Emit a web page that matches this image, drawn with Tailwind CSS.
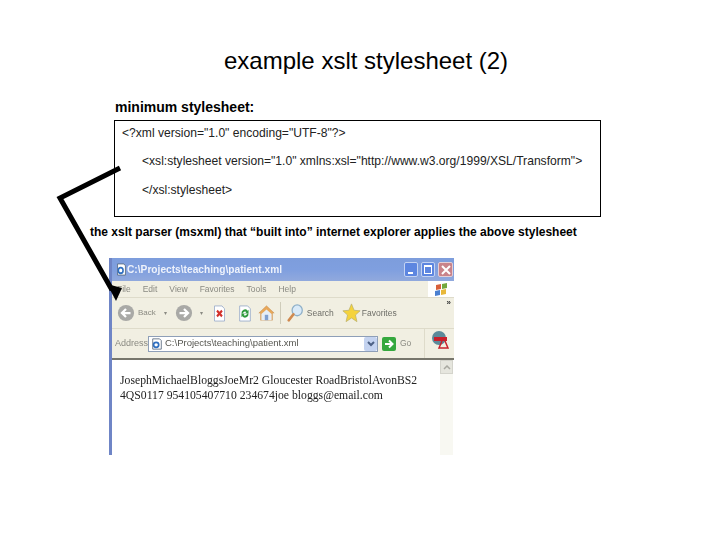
<!DOCTYPE html>
<html lang="en">
<head>
  <meta charset="UTF-8">
  <title>example xslt stylesheet (2)</title>
  <script src="https://cdn.jsdelivr.net/npm/@tailwindcss/browser@4"></script>
</head>
<body class="bg-white">
<div class="relative w-[720px] h-[540px] overflow-hidden bg-white text-black font-['Liberation_Sans',Arial,sans-serif]">

  <h1 class="pt-[47px] pl-[224px] text-[24px] leading-[28px] font-normal whitespace-nowrap">example xslt stylesheet (2)</h1>

  <p class="mt-[24px] ml-[115px] text-[14px] leading-[17px] font-bold whitespace-nowrap">minimum stylesheet:</p>

  <div class="mt-[4px] ml-[114px] w-[487px] h-[97px] border border-black pl-[7px] pt-[5px] text-[12.1px] text-[#222] whitespace-nowrap">
    <p class="h-[28px] leading-[14px]">&lt;?xml version="1.0" encoding="UTF-8"?&gt;</p>
    <p class="h-[29px] pl-[20px] leading-[14px]">&lt;xsl:stylesheet version="1.0" xmlns:xsl="http://www.w3.org/1999/XSL/Transform"&gt;</p>
    <p class="pl-[20px] leading-[14px]">&lt;/xsl:stylesheet&gt;</p>
  </div>

  <p class="mt-[8px] ml-[90px] text-[12px] leading-[15px] font-bold whitespace-nowrap">the xslt parser (msxml) that “built into” internet explorer applies the above stylesheet</p>

  <!-- browser window screenshot, soft like the scaled capture -->
  <div class="mt-[18px] ml-[109px] w-[345px] h-[197px] flex flex-col overflow-hidden border-l-[3px] border-[#6f85c6] bg-[#f1efe2] text-[#8a8a82] text-[9px] blur-[0.4px] font-['Liberation_Sans',sans-serif]">

    <div class="h-[23px] shrink-0 flex items-center pl-[4px] pr-[1px] bg-gradient-to-b from-[#7d9ddc] via-[#7f9fdf] to-[#91a9dd]">
      <svg class="w-[11px] h-[13px]" viewBox="0 0 14 14" preserveAspectRatio="none">
        <path d="M2 1h8l2 2v10H2z" fill="#fff" stroke="#5a6a80"/>
        <circle cx="6" cy="8" r="3" fill="none" stroke="#2f6fc0" stroke-width="2"/>
      </svg>
      <span class="text-[10.2px] font-bold text-[#eef2fb] whitespace-nowrap">C:\Projects\teaching\patient.xml</span>
      <div class="ml-auto flex gap-[3px]">
        <div class="w-[14px] h-[15px] rounded-[2px] bg-[#5d86e0] border border-[#c4d3f2] flex items-end pl-[3px] pb-[2px]"><div class="w-[5px] h-[2px] bg-white"></div></div>
        <div class="w-[14px] h-[15px] rounded-[2px] bg-[#5d86e0] border border-[#c4d3f2] p-[2px]"><div class="w-full h-full border border-t-2 border-white"></div></div>
        <div class="w-[15px] h-[15px] rounded-[2px] bg-[#c9838a] border border-[#e3cfd6] flex items-center justify-center">
          <svg class="w-[10px] h-[10px]" viewBox="0 0 10 10"><path d="M1 1l8 8M9 1l-8 8" stroke="#fff" stroke-width="2"/></svg>
        </div>
      </div>
    </div>

    <div class="h-[17px] shrink-0 flex items-center justify-between border-b border-[#dedbca] pl-[5px] text-[8.5px]">
      <div class="flex gap-[12px]">
        <span>File</span><span>Edit</span><span>View</span><span>Favorites</span><span>Tools</span><span>Help</span>
      </div>
      <div class="w-[26px] h-full bg-white flex items-center justify-center">
        <svg class="w-[15px] h-[15px]" viewBox="0 0 15 15">
          <path d="M2 3l5-1v5l-5 1z" fill="#d8603a"/>
          <path d="M8 2l5-1v5l-5 1z" fill="#74a83e"/>
          <path d="M1 9l5-1v5l-5 1z" fill="#4a7fd0"/>
          <path d="M7 8l5-1v5l-5 1z" fill="#e8b83a"/>
        </svg>
      </div>
    </div>

    <div class="h-[31px] shrink-0 flex items-center pl-[5px] border-b border-[#dedbca]">
      <svg class="w-[18px] h-[18px] shrink-0" viewBox="0 0 20 20">
        <circle cx="10" cy="10" r="9" fill="#a9a9a6"/>
        <path d="M15 10H6M10 5.500L5.500 10l4.500 4.500" fill="none" stroke="#fff" stroke-width="2.500"/>
      </svg>
      <span class="ml-[3px] text-[8px]">Back</span>
      <span class="ml-[8px] text-[6px]">▾</span>
      <svg class="ml-[8px] w-[18px] h-[18px] shrink-0" viewBox="0 0 20 20">
        <circle cx="10" cy="10" r="9" fill="#a9a9a6"/>
        <path d="M5 10h9M10 5.500l4.500 4.500-4.500 4.500" fill="none" stroke="#fff" stroke-width="2.500"/>
      </svg>
      <span class="ml-[7px] text-[6px]">▾</span>
      <svg class="ml-[9px] w-[15px] h-[17px] shrink-0" viewBox="0 0 18 18" preserveAspectRatio="none">
        <path d="M3 1h9l3 3v13H3z" fill="#fff" stroke="#9fb0cc"/>
        <path d="M6 6l6 6M12 6l-6 6" stroke="#d3312b" stroke-width="2.500"/>
      </svg>
      <svg class="ml-[10px] w-[16px] h-[17px] shrink-0" viewBox="0 0 18 18" preserveAspectRatio="none">
        <path d="M3 1h9l3 3v13H3z" fill="#fff" stroke="#9fb0cc"/>
        <path d="M5 9a4 4 0 0 1 7-3l1-1v4H9l1.500-1.500A2.500 2.500 0 0 0 6.500 9z" fill="#2f9a3c"/>
        <path d="M13 9a4 4 0 0 1-7 3l-1 1V9h4l-1.500 1.500a2.500 2.500 0 0 0 4-1.500z" fill="#2f9a3c"/>
      </svg>
      <svg class="ml-[5px] w-[17px] h-[18px] shrink-0" viewBox="0 0 20 20" preserveAspectRatio="none">
        <path d="M1 10l9-8 9 8h-2v8H3v-8z" fill="#e8a85a" stroke="#c08a50" stroke-width=".5"/>
        <path d="M4 11l6-5 6 5v7H4z" fill="#e6edf6"/>
        <path d="M8 12h4v6H8z" fill="#7f9fd0"/>
      </svg>
      <div class="ml-[5px] w-px h-[22px] bg-[#cfccba] shrink-0"></div>
      <svg class="ml-[6px] w-[17px] h-[20px] shrink-0" viewBox="0 0 20 22" preserveAspectRatio="none">
        <circle cx="12" cy="8" r="6" fill="#d9eaf8" stroke="#8fb0c8" stroke-width="1.500"/>
        <path d="M7.500 12.500L2 19" stroke="#d08a50" stroke-width="3" stroke-linecap="round"/>
      </svg>
      <span class="ml-[3px] text-[#6e6e68] text-[8.500px]">Search</span>
      <svg class="ml-[8px] w-[19px] h-[20px] shrink-0" viewBox="0 0 22 22" preserveAspectRatio="none">
        <path d="M11 1l3 7 7 .6-5.400 4.600 1.700 7.300L11 16.500 4.700 20.500l1.700-7.300L1 8.600 8 8z" fill="#f5d33c" stroke="#b9b06a" stroke-width=".8"/>
      </svg>
      <span class="ml-[1px] text-[#6e6e68] text-[8.500px]">Favorites</span>
      <span class="ml-auto mr-[3px] self-start text-[8px] leading-[10px] font-bold text-[#333]">»</span>
    </div>

    <div class="h-[31px] shrink-0 flex items-center pl-[3px] border-b-2 border-[#77766c]">
      <span class="text-[9px] w-[33px]">Address</span>
      <div class="w-[230px] h-[16px] flex items-center bg-white border border-[#8e9fb8] text-[#55554f] text-[9.500px] whitespace-nowrap">
        <svg class="ml-[2px] w-[12px] h-[12px] mr-[2px]" viewBox="0 0 14 14">
          <path d="M2 1h8l2 2v10H2z" fill="#fff" stroke="#5a6a80"/>
          <circle cx="6" cy="8" r="3" fill="none" stroke="#2f6fc0" stroke-width="2"/>
        </svg>
        C:\Projects\teaching\patient.xml
        <div class="ml-auto w-[13px] h-[14px] rounded-[2px] bg-[#c4d3f0] flex items-center justify-center">
          <svg class="w-[8px] h-[6px]" viewBox="0 0 8 6"><path d="M1 1l3 3 3-3" fill="none" stroke="#4d6185" stroke-width="2"/></svg>
        </div>
      </div>
      <div class="ml-[4px] w-[14px] h-[14px] rounded-[2px] bg-[#35a83e] flex items-center justify-center">
        <svg class="w-[10px] h-[10px]" viewBox="0 0 10 10"><path d="M1 5h7M5 1.500L8.500 5 5 8.500" fill="none" stroke="#fff" stroke-width="2"/></svg>
      </div>
      <span class="ml-[4px] text-[8.500px]">Go</span>
      <div class="ml-auto w-[30px] h-full border-l border-[#dedbca] flex items-start justify-center pt-[1px]">
        <svg class="w-[18px] h-[20px]" viewBox="0 0 18 20">
          <circle cx="8" cy="8" r="7" fill="#5c8a9a"/>
          <path d="M3 7h13v4H3z" fill="#c8202c"/>
          <path d="M11 11l-3 7h9l-3-7" fill="none" stroke="#c8202c" stroke-width="1.500"/>
        </svg>
      </div>
    </div>

    <div class="flex-1 flex bg-white min-h-0">
      <div class="flex-1 pl-[8px] pt-[13px] font-['Liberation_Serif',serif] text-[11.7px] leading-[15px] text-[#222]">
        <p class="whitespace-nowrap">JosephMichaelBloggsJoeMr2 Gloucester RoadBristolAvonBS2</p>
        <p class="whitespace-nowrap">4QS0117 954105407710 234674joe bloggs@email.com</p>
      </div>
      <div class="w-[13px] mr-[1px] bg-[#f8f8f2] flex flex-col">
        <div class="h-[14px] bg-[#e6e6de] border border-[#d4d4cc] flex items-center justify-center">
          <svg class="w-[8px] h-[5px]" viewBox="0 0 8 5"><path d="M1 4l3-3 3 3" fill="none" stroke="#a8a8a0" stroke-width="1.500"/></svg>
        </div>
      </div>
    </div>
  </div>

  <!-- black arrow drawn over the slide -->
  <svg class="absolute left-0 top-0 pointer-events-none" width="720" height="540" viewBox="0 0 720 540">
    <path d="M120 168L60 198L112 290" fill="none" stroke="#000" stroke-width="5"/>
    <path d="M116 301L107 284L122 288z" fill="#000"/>
  </svg>
</div>
</body>
</html>
